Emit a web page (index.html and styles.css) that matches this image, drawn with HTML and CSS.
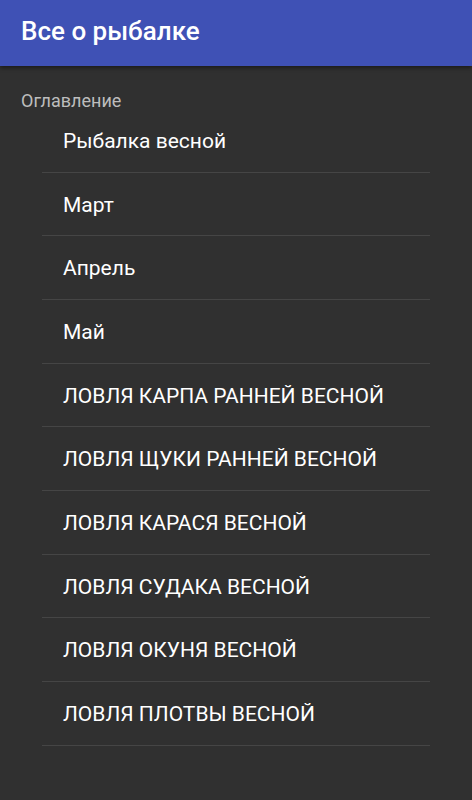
FILE: index.html
```html
<!DOCTYPE html>
<html lang="ru">
<head>
<meta charset="utf-8">
<link rel="stylesheet" href="styles.css">
</head>
<body>
<header class="appbar"><h1 class="title">Все о рыбалке</h1></header>
<main class="content">
  <div class="section">Оглавление</div>
  <ul class="toc">
    <li class="item">Рыбалка весной</li>
    <li class="item">Март</li>
    <li class="item">Апрель</li>
    <li class="item">Май</li>
    <li class="item">ЛОВЛЯ КАРПА РАННЕЙ ВЕСНОЙ</li>
    <li class="item">ЛОВЛЯ ЩУКИ РАННЕЙ ВЕСНОЙ</li>
    <li class="item">ЛОВЛЯ КАРАСЯ ВЕСНОЙ</li>
    <li class="item">ЛОВЛЯ СУДАКА ВЕСНОЙ</li>
    <li class="item">ЛОВЛЯ ОКУНЯ ВЕСНОЙ</li>
    <li class="item">ЛОВЛЯ ПЛОТВЫ ВЕСНОЙ</li>
  </ul>
</main>
</body>
</html>
```
FILE: styles.css
```css
html, body {
  margin: 0;
  padding: 0;
  background: #303030;
  font-family: Roboto, "Noto Sans", sans-serif;
}
body {
  width: 472px;
  height: 800px;
  overflow: hidden;
}
.appbar {
  height: 66px;
  box-sizing: border-box;
  background: #3f51b5;
  display: flex;
  align-items: center;
  padding: 0 21px 4px;
  box-shadow: 0 2px 4px rgba(0,0,0,0.45);
  position: relative;
  z-index: 1;
}
.title {
  margin: 0;
  color: #ffffff;
  font-size: 26px;
  font-weight: 500;
  line-height: 1;
}
.content {
  padding: 0;
}
.section {
  padding: 26px 21px 0;
  height: 17px;
  line-height: 17px;
  font-size: 18px;
  color: #bdbdbd;
}
.toc {
  list-style: none;
  margin: 0;
  padding: 0 42px;
}
.item {
  height: 60.67px;
  line-height: 60.67px;
  padding: 2px 0 0 21px;
  font-size: 21px;
  color: #ffffff;
  border-bottom: 1px solid #454545;
  white-space: nowrap;
}
```
